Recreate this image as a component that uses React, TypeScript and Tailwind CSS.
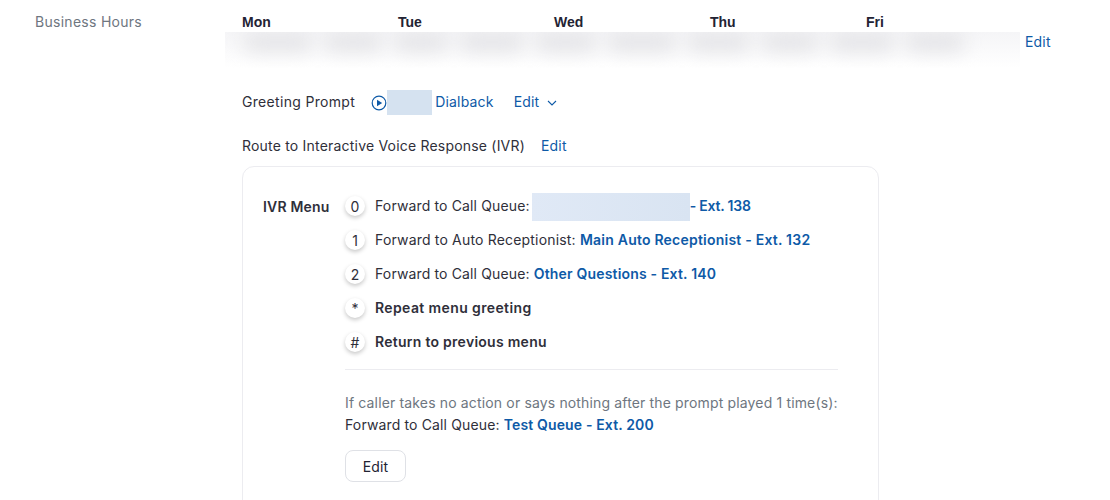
const blue = "text-[#0e5aa7]";

function Key({ k }: { k: string }) {
  return (
    <span className="flex h-5 w-5 shrink-0 items-center justify-center rounded-full bg-white text-[14px] tracking-normal text-[#2f2f3a] shadow-[0_2px_4px_rgba(0,0,0,0.22)]">
      {k}
    </span>
  );
}

function Row({ k, children }: { k: string; children: React.ReactNode }) {
  return (
    <div className="flex h-[34px] items-center gap-[10px]">
      <Key k={k} />
      <div className="flex items-center whitespace-pre pb-[2px]">{children}</div>
    </div>
  );
}

const groups = ["w-[70px]", "w-[60px]", "w-[56px]", "w-[66px]", "w-[62px]", "w-[70px]", "w-[64px]", "w-[58px]", "w-[66px]", "w-[60px]"];

export default function App() {
  return (
    <div className="h-[500px] w-[1110px] overflow-hidden bg-white font-['Inter',sans-serif] text-[14px] tracking-[0.18px] text-[#2f2f3a]">
      <div className="flex pl-[35px]">
        <div className="w-[190px] shrink-0 pt-[13px] leading-[17px] tracking-[0.28px] text-[#6e7680]">Business Hours</div>
        <div className="flex-1">
          <div className="grid w-[797px] grid-cols-5 pl-[17px] pt-[13px] font-['Liberation_Sans',sans-serif] text-[14px] font-bold leading-[19px] tracking-normal text-[#232333]">
            <span>Mon</span>
            <span>Tue</span>
            <span>Wed</span>
            <span>Thu</span>
            <span>Fri</span>
          </div>
          <div className="flex h-9 items-start">
            <div className="h-9 w-[795px] overflow-hidden bg-gradient-to-b from-[#f5f5f7] via-[#fafafb] to-white">
              <div className="flex gap-[10px] pl-[18px] blur-[9px]">
                {groups.map((s, i) => (
                  <div key={i} className={`h-[20px] ${s} shrink-0 rounded-full bg-[#e5e5e8]`} />
                ))}
              </div>
            </div>
            <a className={`ml-[5px] leading-5 ${blue}`}>Edit</a>
          </div>

          <div className="mt-[22px] flex h-[25px] items-center pl-[17px]">
            <span className="pb-[2px] tracking-[0.32px]">Greeting Prompt</span>
            <svg className="ml-[16px] h-[16px] w-[16px] text-[#0e5aa7]" viewBox="0 0 16 16" fill="none">
              <circle cx="8" cy="8" r="6.8" stroke="currentColor" strokeWidth="1.2" />
              <path d="M6 4.8v6.4L11.2 8z" fill="currentColor" />
            </svg>
            <span className="h-[25px] w-[45px] bg-[#d5e2f0]" />
            <a className={`ml-[3px] pb-[2px] ${blue}`}>Dialback</a>
            <a className={`ml-[20px] pb-[2px] ${blue}`}>Edit</a>
            <svg className="ml-[8px] h-[10px] w-[10px] text-[#0e5aa7]" viewBox="0 0 10 10" fill="none">
              <path d="M1 3l4 4 4-4" stroke="currentColor" strokeWidth="1.1" />
            </svg>
          </div>

          <div className="mt-[18px] flex h-[26px] items-center pb-[2px] pl-[17px]">
            <span className="tracking-[0.2px]">Route to Interactive Voice Response (IVR)</span>
            <a className={`ml-4 ${blue}`}>Edit</a>
          </div>

          <div className="ml-[17px] mt-[7px] flex h-[400px] w-[637px] rounded-xl border border-[#ececf0] pl-5 pr-10 pt-[22px]">
            <div className="w-[82px] shrink-0 pt-[9px] font-semibold leading-[17px]">IVR Menu</div>
            <div className="flex-1">
              <Row k="0">
                <span className="tracking-[0.14px]">Forward to Call Queue:</span>
                <span className="ml-[2px] mt-[3px] h-7 w-[158px] bg-gradient-to-r from-[#e0e9f6] to-[#d9e4f2]" />
                <span className={`font-semibold tracking-[-0.2px] ${blue}`}>- Ext. 138</span>
              </Row>
              <Row k="1">
                <span>Forward to Auto Receptionist: </span>
                <span className={`font-semibold tracking-[0.22px] ${blue}`}>Main Auto Receptionist - Ext. 132</span>
              </Row>
              <Row k="2">
                <span className="tracking-[0.14px]">Forward to Call Queue: </span>
                <span className={`font-semibold ${blue}`}>Other Questions - Ext. 140</span>
              </Row>
              <Row k="*">
                <span className="font-semibold tracking-[0.38px]">Repeat menu greeting</span>
              </Row>
              <Row k="#">
                <span className="font-semibold tracking-[0.27px]">Return to previous menu</span>
              </Row>
              <div className="mt-[10px] border-t border-[#ececf0]" />
              <div className="mt-[22px] whitespace-nowrap leading-[22px] tracking-[0.15px] text-[#6e7680]">
                If caller takes no action or says nothing after the prompt played 1 time(s):
              </div>
              <div className="leading-[22px] tracking-[0.14px]">
                Forward to Call Queue: <span className={`font-semibold tracking-[0.14px] ${blue}`}>Test Queue - Ext. 200</span>
              </div>
              <button className="mt-[14px] h-8 w-[61px] rounded-lg border border-[#dfe1e6] bg-white text-[#232333]">Edit</button>
            </div>
          </div>
        </div>
      </div>
    </div>
  );
}
